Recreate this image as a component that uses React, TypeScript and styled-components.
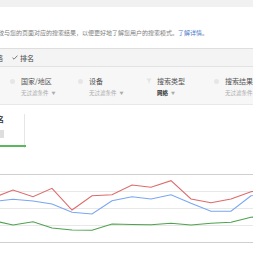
import React from "react";
import styled, { createGlobalStyle } from "styled-components";

const Global = createGlobalStyle`
  html, body { margin: 0; padding: 0; background: #fff; }
  body { width: 253px; height: 253px; overflow: hidden; font-family: "Noto Sans CJK SC", "Noto Sans", sans-serif; }
`;

const Page = styled.div`
  width: 253px;
  height: 253px;
  overflow: hidden;
  display: flex;
  flex-direction: column;
`;

const TopBand = styled.div`
  height: 7px;
  background: #f1f1f1;
`;

const Description = styled.div`
  height: 42px;
  padding-top: 22px;
  box-sizing: border-box;
  font-size: 6px;
  line-height: 8px;
  color: #7d7d7d;
  white-space: nowrap;
  margin-left: -8px;
  border-bottom: 1px solid #dedede;
`;

const Link = styled.span`
  color: #4a78c9;
`;

const TabRow = styled.div`
  height: 17px;
  background: #f4f4f4;
  border-bottom: 1px solid #e2e2e2;
  display: flex;
  align-items: center;
  gap: 9px;
  font-size: 7px;
  color: #444;
  margin-left: -11px;
`;

const Tab = styled.span`
  display: flex;
  align-items: center;
  gap: 2px;
`;

const FilterRow = styled.div`
  height: 38px;
  background: #f7f7f7;
  border-bottom: 1px solid #e8e8e8;
  display: flex;
  padding-left: 10px;
  box-sizing: border-box;
`;

const Filter = styled.div`
  width: 68px;
  flex-shrink: 0;
  display: grid;
  grid-template-columns: 11px auto;
  grid-template-rows: 12px 10px;
  padding-top: 9px;
`;

const Dot = styled.span`
  width: 5px;
  height: 5px;
  border-radius: 50%;
  background: #e6e6e6;
  margin-top: 3px;
`;

const FilterLabel = styled.span`
  font-size: 7px;
  line-height: 10px;
  color: #555;
  white-space: nowrap;
`;

const FilterValue = styled.span<{ $active?: boolean }>`
  grid-column: 2;
  font-size: 5.5px;
  line-height: 10px;
  white-space: nowrap;
  color: ${(p) => (p.$active ? "#333" : "#aaa")};
  font-weight: ${(p) => (p.$active ? 700 : 400)};
`;

const Caret = styled.span`
  font-size: 4px;
  margin-left: 3px;
  color: #aaa;
`;

const MetricArea = styled.div`
  height: 60px;
  display: flex;
  padding-top: 9px;
  box-sizing: border-box;
`;

const MetricWrap = styled.div`
  width: 34px;
  height: 34px;
  border-right: 1px solid #e6e6e6;
  margin-left: -10px;
`;

const MetricCard = styled.div`
  width: 36px;
  height: 33px;
  border-bottom: 2px solid #5cb85c;
  display: flex;
  flex-direction: column;
  gap: 6px;
  padding-top: 1px;
  box-sizing: border-box;
`;

const MetricTitle = styled.span`
  font-size: 7px;
  line-height: 9px;
  font-weight: 700;
  color: #333;
`;

const MetricBox = styled.span`
  width: 14px;
  height: 8px;
  background: #dedede;
`;

const Chart = styled.svg`
  display: block;
  margin-top: 4px;
`;

const red = [
  [-7, 194], [13, 186], [33, 192.7], [52, 184.3], [72, 206], [92, 191.7], [112, 190.7],
  [132, 181], [151, 183.3], [171, 176.7], [191, 195], [211, 198.7], [231, 195], [251, 187.7], [271, 184],
];
const blue = [
  [-7, 197.5], [13, 195.3], [33, 197], [52, 200], [72, 208.3], [92, 210], [112, 196.7],
  [132, 192.7], [151, 195], [171, 190.7], [191, 199.3], [211, 207.3], [231, 207.3], [251, 191.7], [271, 190],
];
const green = [
  [-7, 216.5], [13, 221], [33, 217.7], [52, 224], [72, 226], [92, 226.3], [112, 220],
  [132, 220.5], [151, 220.7], [171, 219.3], [191, 221], [211, 219.3], [231, 218.3], [251, 213.3], [271, 212],
];

const OFFSET = 165;
const pts = (a: number[][]) => a.map(([x, y]) => `${x},${y - OFFSET}`).join(" ");

export default function App() {
  return (
    <Page>
      <Global />
      <TopBand />
      <Description>
        比较与您的页面对应的搜索结果，以便更好地了解您用户的搜索模式。<Link>了解详情</Link>。
      </Description>
      <TabRow>
        <Tab>网络</Tab>
        <Tab>
          <svg width="6" height="5" viewBox="0 0 6 5">
            <path d="M0.5 2.8 L2 4.2 L5.5 0.6" fill="none" stroke="#555" strokeWidth="0.8" />
          </svg>
          排名
        </Tab>
      </TabRow>
      <FilterRow>
        <Filter>
          <Dot />
          <FilterLabel>国家/地区</FilterLabel>
          <FilterValue>无过滤条件<Caret>▼</Caret></FilterValue>
        </Filter>
        <Filter>
          <Dot />
          <FilterLabel>设备</FilterLabel>
          <FilterValue>无过滤条件<Caret>▼</Caret></FilterValue>
        </Filter>
        <Filter>
          <svg width="6" height="6" viewBox="0 0 6 6" style={{ marginTop: 2 }}>
            <path d="M0.3 0.5 H5.7 L3.6 3.2 V5.6 L2.4 5 V3.2 Z" fill="#e4e4e4" />
          </svg>
          <FilterLabel>搜索类型</FilterLabel>
          <FilterValue $active>网络<Caret>▼</Caret></FilterValue>
        </Filter>
        <Filter>
          <Dot />
          <FilterLabel>搜索结果呈现</FilterLabel>
          <FilterValue>无过滤条件<Caret>▼</Caret></FilterValue>
        </Filter>
      </FilterRow>
      <MetricArea>
        <MetricWrap>
          <MetricCard>
            <MetricTitle>排名</MetricTitle>
            <MetricBox />
          </MetricCard>
        </MetricWrap>
      </MetricArea>
      <Chart width="253" height="80" viewBox="0 0 253 80">
        {[170, 187, 204, 221, 238].map((y, i) => (
          <line
            key={y}
            x1="0"
            x2="253"
            y1={y - OFFSET + 0.5}
            y2={y - OFFSET + 0.5}
            stroke={i === 0 || i === 4 ? "#cfcfcf" : "#e8e8e8"}
            strokeWidth="1"
          />
        ))}
        <polyline points={pts(green)} fill="none" stroke="#4ea24e" strokeWidth="1.1" />
        <polyline points={pts(blue)} fill="none" stroke="#79a6f2" strokeWidth="1.1" />
        <polyline points={pts(red)} fill="none" stroke="#de6a6a" strokeWidth="1.1" />
      </Chart>
    </Page>
  );
}
